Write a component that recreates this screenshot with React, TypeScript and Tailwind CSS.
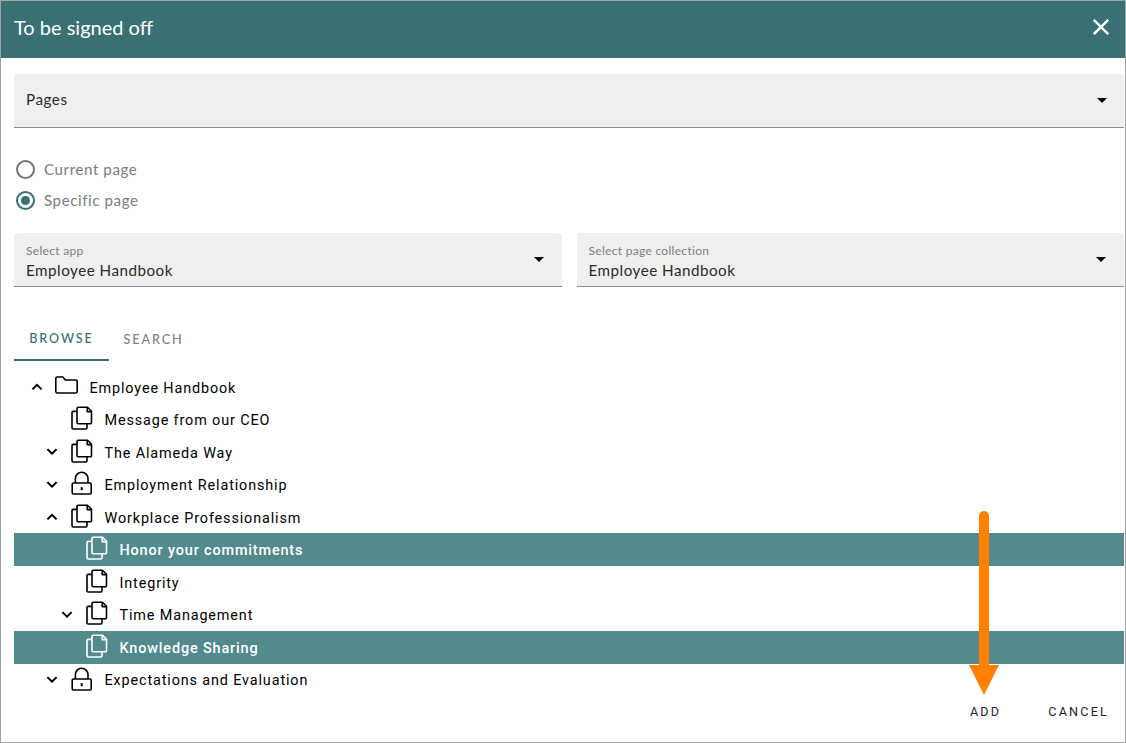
import React from "react";

const sans = "font-['Lato','Open_Sans',sans-serif]";

function Chevron({ up }: { up?: boolean }) {
  return (
    <svg width="24" height="24" viewBox="0 0 24 24" className="shrink-0">
      <path d={up ? "M7.4 14.4 12 9.8l4.6 4.6" : "M7.4 9.1 12 13.7l4.6-4.6"} fill="none" stroke="currentColor" strokeWidth="2" />
    </svg>
  );
}

function Pages() {
  return (
    <svg width="24" height="24" viewBox="0 0 24 24" fill="none" stroke="currentColor" strokeWidth="1.6" strokeLinejoin="round" className="shrink-0">
      <path d="M9.2 1.2h9.3l4 4v11.3a1.2 1.2 0 0 1-1.2 1.2H9.2A1.2 1.2 0 0 1 8 16.5V2.4a1.2 1.2 0 0 1 1.2-1.2Z" />
      <path d="M18.2 1.4v4.2h4.2" />
      <path d="M8 5.4H4.2A1.2 1.2 0 0 0 3 6.6v15.2A1.2 1.2 0 0 0 4.2 23h12.6a1.2 1.2 0 0 0 1.2-1.2V18" />
    </svg>
  );
}

function Lock() {
  return (
    <svg width="24" height="24" viewBox="0 0 24 24" fill="none" stroke="currentColor" strokeWidth="1.6" strokeLinejoin="round" className="shrink-0">
      <rect x="3.2" y="12" width="19" height="11" rx="1.2" />
      <path d="M6.4 12V7.6a6.3 6.3 0 0 1 12.6 0V12" />
      <path d="M12.7 16.2v3" strokeWidth="2" />
    </svg>
  );
}

function Folder() {
  return (
    <svg width="24" height="24" viewBox="0 0 24 24" fill="none" stroke="currentColor" strokeWidth="1.6" strokeLinejoin="round" className="shrink-0">
      <path d="M1.8 4.4a1.4 1.4 0 0 1 1.4-1.4h5.7l2.4 3h10.5a1.4 1.4 0 0 1 1.4 1.4v10.2a1.4 1.4 0 0 1-1.4 1.4H3.2a1.4 1.4 0 0 1-1.4-1.4Z" />
    </svg>
  );
}

function Caret() {
  return (
    <svg width="10" height="5" viewBox="0 0 10 5" className="shrink-0">
      <path d="M0 0h10L5 5Z" fill="#000" />
    </svg>
  );
}

type Row = { label: string; level: number; icon: "folder" | "pages" | "lock"; chevron?: "up" | "down"; selected?: boolean };

const rows: Row[] = [
  { label: "Employee Handbook", level: 0, icon: "folder", chevron: "up" },
  { label: "Message from our CEO", level: 1, icon: "pages" },
  { label: "The Alameda Way", level: 1, icon: "pages", chevron: "down" },
  { label: "Employment Relationship", level: 1, icon: "lock", chevron: "down" },
  { label: "Workplace Professionalism", level: 1, icon: "pages", chevron: "up" },
  { label: "Honor your commitments", level: 2, icon: "pages", selected: true },
  { label: "Integrity", level: 2, icon: "pages" },
  { label: "Time Management", level: 2, icon: "pages", chevron: "down" },
  { label: "Knowledge Sharing", level: 2, icon: "pages", selected: true },
  { label: "Expectations and Evaluation", level: 1, icon: "lock", chevron: "down" },
];

const indent = ["pl-[11px]", "pl-[26px]", "pl-[41px]"];

function TreeRow({ row }: { row: Row }) {
  return (
    <div
      className={`flex h-[32.55px] items-center ${indent[row.level]} ${row.selected ? "bg-[#528a8e] text-white" : "text-black"}`}
    >
      <span className="flex w-[24px] justify-center">{row.chevron && <Chevron up={row.chevron === "up"} />}</span>
      <span className="ml-[5px] mr-[11.5px] -mt-[2.5px]">
        {row.icon === "folder" ? <Folder /> : row.icon === "lock" ? <Lock /> : <Pages />}
      </span>
      <span className={`pt-[3px] font-['Roboto',sans-serif] text-[14.4px] tracking-[0.87px] ${row.selected ? "font-medium" : ""}`}>{row.label}</span>
    </div>
  );
}

function SelectBox({ label, value }: { label: string; value: string }) {
  return (
    <div className="flex h-[54px] flex-1 items-center justify-between rounded-t-[4px] border-b border-[#8c8c8c] bg-[#efefef] pl-[12px] pr-[18px]">
      <div className={`${sans} pt-[4px]`}>
        <div className="text-[12px] leading-[14px] tracking-[0.3px] text-[#808080]">{label}</div>
        <div className="mt-[2px] text-[15.2px] leading-[20px] tracking-[0.5px] text-[#2a2a2a]">{value}</div>
      </div>
      <Caret />
    </div>
  );
}

function Radio({ checked, label }: { checked?: boolean; label: string }) {
  return (
    <div className="flex h-[31px] items-center">
      <span className={`ml-[2px] flex h-[19px] w-[19px] items-center justify-center rounded-full border-2 ${checked ? "border-[#387074]" : "border-[#757575]"}`}>
        {checked && <span className="h-[9px] w-[9px] rounded-full bg-[#387074]" />}
      </span>
      <span className={`${sans} ml-[9px] text-[15.2px] tracking-[0.55px] text-[#7d7d7d]`}>{label}</span>
    </div>
  );
}

export default function App() {
  return (
    <div className="relative flex h-[743px] w-[1126px] flex-col overflow-hidden border border-[#a3a3a3] bg-white">
      <header className="flex h-[57px] shrink-0 items-center justify-between bg-[#387074] pb-[5px] pl-[13px] pr-[14px]">
        <h1 className={`${sans} text-[20px] font-normal text-white`}>To be signed off</h1>
        <svg width="20" height="20" viewBox="0 0 20 20" className="text-white">
          <path d="M2.8 2.8l14.4 14.4M17.2 2.8 2.8 17.2" stroke="currentColor" strokeWidth="2.4" fill="none" />
        </svg>
      </header>

      <main className="flex flex-1 flex-col pl-[13px] pr-[1px]">
        <div className="mt-[16px] flex h-[54px] items-center justify-between rounded-t-[4px] border-b border-[#8c8c8c] bg-[#efefef] pl-[12px] pr-[17.5px]">
          <span className={`${sans} pb-[2px] text-[15.2px] tracking-[0.55px] text-[#2a2a2a]`}>Pages</span>
          <Caret />
        </div>

        <div className="mt-[26px] flex flex-col">
          <Radio label="Current page" />
          <Radio checked label="Specific page" />
        </div>

        <div className="mt-[17px] flex gap-[15px]">
          <SelectBox label="Select app" value="Employee Handbook" />
          <SelectBox label="Select page collection" value="Employee Handbook" />
        </div>

        <div className="mt-[31px] flex h-[43px]">
          <div className={`${sans} flex w-[95px] items-center justify-center border-b-2 border-[#387074] pt-[2px] text-[12.6px] font-medium tracking-[1.9px] text-[#387074]`}>BROWSE</div>
          <div className={`${sans} flex w-[89px] items-center justify-center pt-[1px] text-[12.6px] font-medium tracking-[1.9px] text-[#808080]`}>SEARCH</div>
        </div>

        <div className="mt-[9.6px]">
          {rows.map((r) => (
            <TreeRow key={r.label} row={r} />
          ))}
        </div>

        <div className="mt-[7.4px] flex justify-end pr-[15px] font-['Roboto',sans-serif] text-[12.6px] tracking-[2.2px] text-[#1c1c2e]">
          <span>ADD</span>
          <span className="ml-[47px]">CANCEL</span>
        </div>
      </main>

      <svg width="32" height="186" viewBox="0 0 32 186" className="absolute left-[967px] top-[509px]">
        <path d="M16 6v152" stroke="#ff8000" strokeWidth="10" strokeLinecap="round" fill="none" />
        <path d="M1 155h30l-15 30Z" fill="#ff8000" />
      </svg>
    </div>
  );
}
